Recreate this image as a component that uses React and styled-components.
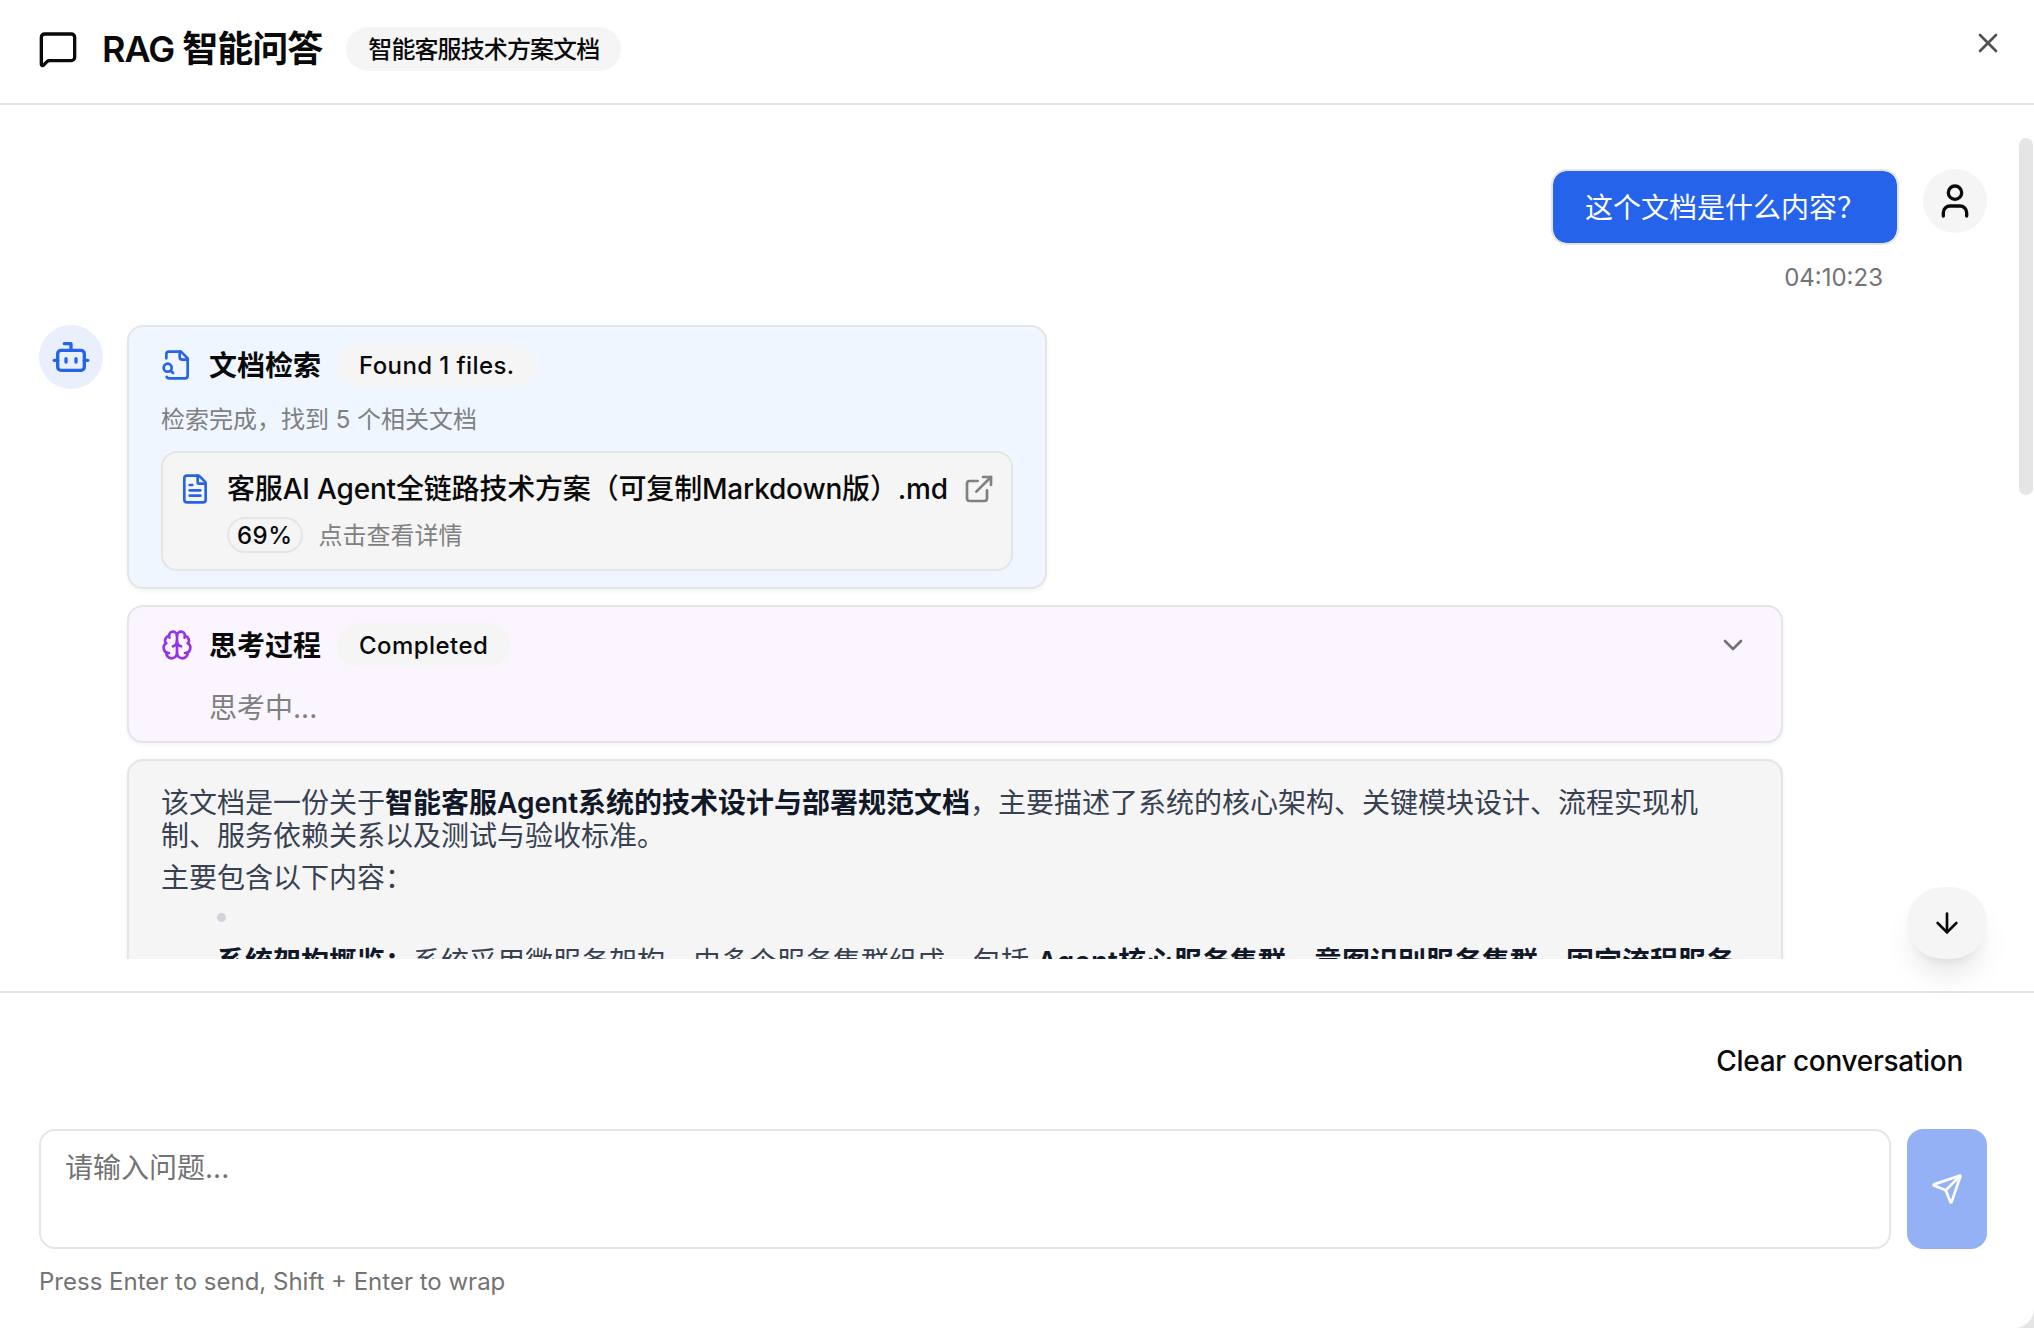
import React from "react";
import styled, { createGlobalStyle } from "styled-components";
import {
  MessageSquare,
  X,
  User,
  Bot,
  FileText,
  ExternalLink,
  Brain,
  ChevronDown,
  ArrowDown,
  Send,
} from "lucide-react";

const GlobalStyle = createGlobalStyle`
  * { box-sizing: border-box; }
  html { background: #e5e5e5; }
  body {
    margin: 0;
    font-family: Inter, "Noto Sans CJK SC", sans-serif;
    color: #0a0a0a;
  }
`;

const Page = styled.div`
  position: relative;
  width: 100vw;
  height: 100vh;
  background: #fff;
  border-bottom-right-radius: 20px;
  overflow: hidden;
  display: flex;
  flex-direction: column;
`;

const Header = styled.header`
  height: 105px;
  flex: none;
  display: flex;
  align-items: center;
  gap: 24px;
  padding: 0 0 6px 38px;
  border-bottom: 2px solid #e5e5e5;
`;

const Title = styled.h2`
  margin: 0;
  font-size: 36px;
  line-height: 48px;
  font-weight: 600;
  letter-spacing: -1px;
`;

const Pill = styled.span`
  display: inline-flex;
  align-items: center;
  height: 44px;
  padding: 2px ${(p) => p.$pad || 20}px 0;
  border: 2px solid transparent;
  border-radius: 999px;
  background: #f5f5f5;
  color: #0a0a0a;
  font-size: 24px;
  line-height: 32px;
  font-weight: 500;
  letter-spacing: ${(p) => p.$spacing || 0}px;
  white-space: nowrap;
`;

const CloseButton = styled.button`
  position: absolute;
  top: 27px;
  right: 30px;
  padding: 0;
  width: 32px;
  height: 32px;
  border: 0;
  background: none;
  color: #0a0a0a;
  opacity: 0.7;
  svg { display: block; }
`;

const Frame = styled.div`
  position: relative;
  flex: none;
  height: 854px;
  margin-bottom: 32px;
`;

const Viewport = styled.div`
  height: 100%;
  overflow: hidden;
  padding: 64px 47px 0 39px;
  display: flex;
  flex-direction: column;
  gap: 32px;
`;

const ScrollThumb = styled.div`
  position: absolute;
  top: 33px;
  right: 1px;
  width: 14px;
  height: 357px;
  border-radius: 7px;
  background: #e5e5e5;
`;

const ScrollDown = styled.button`
  position: absolute;
  right: 47px;
  bottom: 0;
  width: 80px;
  height: 72px;
  padding: 0;
  border: 0;
  border-radius: 36px;
  background: #f5f5f5;
  color: #0a0a0a;
  display: flex;
  align-items: center;
  justify-content: center;
  box-shadow: 0 20px 30px -6px rgba(0, 0, 0, 0.1), 0 8px 12px -8px rgba(0, 0, 0, 0.1);
`;

const UserRow = styled.div`
  display: flex;
  justify-content: flex-end;
  align-items: flex-start;
  gap: 24px;
`;

const UserColumn = styled.div`
  display: flex;
  flex-direction: column;
  align-items: flex-end;
  gap: 16px;
`;

const Bubble = styled.div`
  padding: 17px 32px 15px;
  border: 2px solid #e5e5e5;
  border-radius: 16px;
  background: #2563eb;
  background-clip: padding-box;
  color: #fff;
  font-size: 28px;
  line-height: 40px;
  white-space: nowrap;
`;

const Time = styled.div`
  padding: 1px 16px 0 0;
  font-size: 24px;
  line-height: 31px;
  color: #737373;
`;

const Avatar = styled.div`
  flex: none;
  width: 64px;
  height: 64px;
  border-radius: 50%;
  background: ${(p) => p.$bg};
  color: ${(p) => p.$fg};
  display: flex;
  align-items: center;
  justify-content: center;
`;

const BotRow = styled.div`
  display: flex;
  align-items: flex-start;
  gap: 24px;
`;

const BotColumn = styled.div`
  width: 1656px;
  flex: none;
  display: flex;
  flex-direction: column;
  gap: 16px;
`;

const Card = styled.section`
  width: ${(p) => p.$width || "100%"};
  padding: ${(p) => p.$padding || "16px 32px"};
  border: 2px solid #e5e5e5;
  border-radius: 16px;
  background: ${(p) => p.$bg};
  box-shadow: 0 2px 4px rgba(0, 0, 0, 0.05);
`;

const CardHead = styled.div`
  display: flex;
  align-items: center;
  gap: 16px;
  color: ${(p) => p.$iconColor};
  svg { flex: none; }
`;

const CardTitle = styled.span`
  padding-top: 2px;
  font-size: 28px;
  line-height: 40px;
  font-weight: 600;
  color: #0a0a0a;
`;

const Chevron = styled(ChevronDown)`
  margin-left: auto;
  color: #737373;
`;

const SubText = styled.div`
  margin-top: 17px;
  font-size: 24px;
  line-height: 31px;
  color: #808080;
`;

const FileCard = styled.div`
  margin-top: 16px;
  padding: 16px;
  border: 2px solid #e5e5e5;
  border-radius: 16px;
  background: #f5f5f5;
`;

const FileRow = styled.div`
  display: flex;
  align-items: center;
  gap: 16px;
  color: #2563eb;
  svg { flex: none; }
`;

const FileName = styled.span`
  flex: 1;
  min-width: 0;
  font-size: 28px;
  line-height: 40px;
  font-weight: 500;
  letter-spacing: -0.18px;
  color: #0a0a0a;
  white-space: nowrap;
`;

const OpenIcon = styled(ExternalLink)`
  color: #808080;
`;

const FileMeta = styled.div`
  margin: 8px 0 0 48px;
  display: flex;
  align-items: center;
  gap: 16px;
`;

const Score = styled.span`
  height: 36px;
  padding: 1px 8px 0;
  border: 2px solid #e5e5e5;
  border-radius: 999px;
  font-size: 24px;
  line-height: 31px;
  font-weight: 500;
  letter-spacing: 0.5px;
`;

const Hint = styled.span`
  padding-top: 2px;
  font-size: 24px;
  line-height: 32px;
  color: #808080;
`;

const Thinking = styled.div`
  margin: 21px 0 0 48px;
  font-size: 28px;
  line-height: 40px;
  color: #808080;
`;

const Prose = styled.div`
  font-size: 28px;
  line-height: 33px;
  color: #374151;
  strong {
    font-weight: 600;
    color: #111827;
  }
`;

const Para = styled.p`
  margin: 0 0 9px;
`;

const List = styled.ul`
  list-style: none;
  margin: 18px 0 0;
  padding: 0 0 0 56px;
`;

const ListItem = styled.li`
  &::before {
    content: "";
    display: block;
    width: 9px;
    height: 9px;
    margin-bottom: 24px;
    border-radius: 50%;
    background: #d1d5db;
  }
`;

const Footer = styled.footer`
  flex: 1;
  border-top: 2px solid #e5e5e5;
  padding: 32px 47px 0 39px;
`;

const FooterActions = styled.div`
  display: flex;
  justify-content: flex-end;
`;

const GhostButton = styled.button`
  height: 72px;
  padding: 0 24px;
  border: 0;
  background: none;
  font: 500 28px/40px Inter, "Noto Sans CJK SC", sans-serif;
  letter-spacing: -0.3px;
  color: #0a0a0a;
`;

const InputRow = styled.div`
  margin-top: 32px;
  display: flex;
  gap: 16px;
`;

const Input = styled.textarea`
  flex: 1;
  height: 120px;
  padding: 17px 24px 15px;
  border: 2px solid #e5e5e5;
  border-radius: 16px;
  outline: none;
  resize: none;
  background: #fff;
  font: 400 28px/40px Inter, "Noto Sans CJK SC", sans-serif;
  color: #0a0a0a;
  &::placeholder {
    color: #737373;
    opacity: 1;
  }
`;

const SendButton = styled.button`
  flex: none;
  width: 80px;
  height: 120px;
  padding: 0;
  border: 0;
  border-radius: 16px;
  background: #95b1f5;
  color: #fff;
  display: flex;
  align-items: center;
  justify-content: center;
`;

const FooterHint = styled.div`
  margin-top: 17px;
  font-size: 24px;
  line-height: 31px;
  color: #737373;
`;

const FileSearchIcon = () => (
  <svg
    width="32"
    height="32"
    viewBox="0 0 24 24"
    fill="none"
    stroke="currentColor"
    strokeWidth="2"
    strokeLinecap="round"
    strokeLinejoin="round"
  >
    <path d="M14 2v4a2 2 0 0 0 2 2h4" />
    <path d="M4.268 21a2 2 0 0 0 1.727 1H18a2 2 0 0 0 2-2V7l-5-5H6a2 2 0 0 0-2 2v3" />
    <path d="m9 18-1.5-1.5" />
    <circle cx="5" cy="14" r="3" />
  </svg>
);

export default function App() {
  return (
    <>
      <GlobalStyle />
      <Page>
        <Header>
          <MessageSquare size={40} strokeWidth={2} />
          <Title>RAG 智能问答</Title>
          <Pill $pad={20} $spacing={-0.9}>智能客服技术方案文档</Pill>
        </Header>
        <CloseButton aria-label="Close">
          <X size={32} />
        </CloseButton>

        <Frame>
          <Viewport>
            <UserRow>
              <UserColumn>
                <Bubble>这个文档是什么内容？</Bubble>
                <Time>04:10:23</Time>
              </UserColumn>
              <Avatar $bg="#f5f5f5" $fg="#0a0a0a">
                <User size={40} />
              </Avatar>
            </UserRow>

            <BotRow>
              <Avatar $bg="#e9effd" $fg="#2563eb">
                <Bot size={40} />
              </Avatar>
              <BotColumn>
                <Card $bg="#eff6ff" $width="920px">
                  <CardHead $iconColor="#2563eb">
                    <FileSearchIcon />
                    <CardTitle>文档检索</CardTitle>
                    <Pill $spacing={0.4}>Found 1 files.</Pill>
                  </CardHead>
                  <SubText>检索完成，找到 5 个相关文档</SubText>
                  <FileCard>
                    <FileRow>
                      <FileText size={32} />
                      <FileName>客服AI Agent全链路技术方案（可复制Markdown版）.md</FileName>
                      <OpenIcon size={32} />
                    </FileRow>
                    <FileMeta>
                      <Score>69%</Score>
                      <Hint>点击查看详情</Hint>
                    </FileMeta>
                  </FileCard>
                </Card>

                <Card $bg="#faf5ff" $padding="16px 32px 13px">
                  <CardHead $iconColor="#9333ea">
                    <Brain size={32} />
                    <CardTitle>思考过程</CardTitle>
                    <Pill $spacing={0.45}>Completed</Pill>
                    <Chevron size={32} />
                  </CardHead>
                  <Thinking>思考中...</Thinking>
                </Card>

                <Card $bg="#f5f5f5" $padding="26px 32px 24px">
                  <Prose>
                    <Para>
                      该文档是一份关于<strong>智能客服Agent系统的技术设计与部署规范文档</strong>
                      ，主要描述了系统的核心架构、关键模块设计、流程实现机制、服务依赖关系以及测试与验收标准。
                    </Para>
                    <Para>主要包含以下内容：</Para>
                    <List>
                      <ListItem>
                        <strong>系统架构概览：</strong>系统采用微服务架构，由多个服务集群组成，包括 <strong>Agent核心服务集群</strong>、<strong>意图识别服务集群</strong>、<strong>固定流程服务</strong>
                      </ListItem>
                    </List>
                  </Prose>
                </Card>
              </BotColumn>
            </BotRow>
          </Viewport>
          <ScrollThumb />
          <ScrollDown aria-label="Scroll to bottom">
            <ArrowDown size={32} />
          </ScrollDown>
        </Frame>

        <Footer>
          <FooterActions>
            <GhostButton>Clear conversation</GhostButton>
          </FooterActions>
          <InputRow>
            <Input placeholder="请输入问题..." />
            <SendButton aria-label="Send">
              <Send size={32} />
            </SendButton>
          </InputRow>
          <FooterHint>Press Enter to send, Shift + Enter to wrap</FooterHint>
        </Footer>
      </Page>
    </>
  );
}
